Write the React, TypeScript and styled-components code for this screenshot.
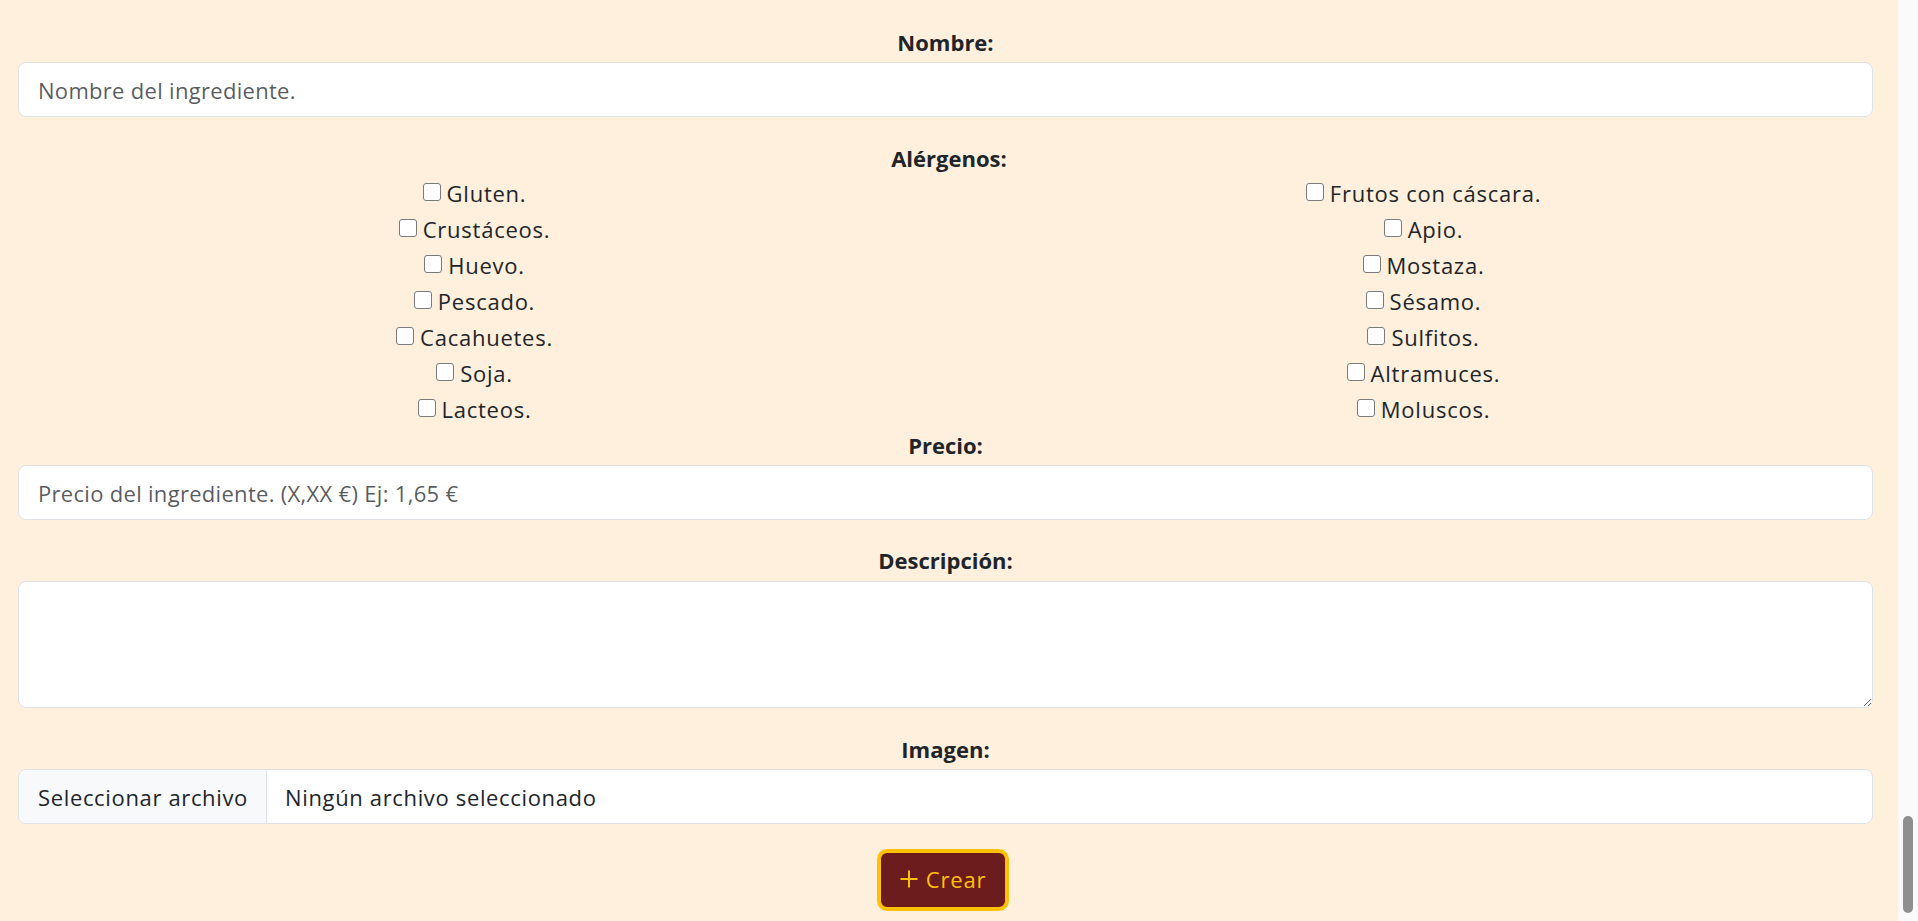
import React from "react";
import styled, { createGlobalStyle } from "styled-components";

const GlobalStyle = createGlobalStyle`
  html, body {
    margin: 0;
    padding: 0;
    height: 100%;
    overflow: hidden;
  }
  body {
    background: #fff0dd;
    font-family: "Open Sans", "Liberation Sans", sans-serif;
    color: #212529;
  }
  * { box-sizing: border-box; }
`;

const Screen = styled.div`
  display: flex;
  height: 100vh;
  overflow: hidden;
`;

const Main = styled.form`
  flex: 1;
  min-width: 0;
  display: flex;
  flex-direction: column;
  padding: 26px 25px 0 18px;
`;

const Field = styled.div<{ $gap?: number }>`
  display: flex;
  flex-direction: column;
  margin-bottom: ${(p) => (p.$gap ?? 25)}px;
`;

const Label = styled.label<{ $mb?: number }>`
  display: block;
  text-align: center;
  font-weight: 700;
  font-size: 22px;
  line-height: 33px;
  margin-bottom: ${(p) => (p.$mb ?? 3)}px;
  color: #212529;
`;

const TextInput = styled.input`
  height: 55px;
  width: 100%;
  border: 1px solid #dee2e6;
  border-radius: 8px;
  background: #fff;
  padding: 0 19px;
  font-family: inherit;
  font-size: 22px;
  letter-spacing: 0.3px;
  color: #212529;
  outline: none;
  &::placeholder {
    color: rgba(33, 37, 41, 0.75);
  }
`;

const TextArea = styled.textarea`
  height: 127px;
  width: 100%;
  border: 1px solid #dee2e6;
  border-radius: 8px;
  background: #fff;
  padding: 10px 19px;
  font-family: inherit;
  font-size: 22px;
  color: #212529;
  resize: vertical;
  outline: none;
  display: block;
`;

const AllergenBlock = styled.div`
  margin: 0 -25px 2px -18px;
  display: flex;
  flex-direction: column;
`;

const AllergenGrid = styled.div`
  display: grid;
  grid-template-columns: 1fr 1fr;
`;

const AllergenColumn = styled.div`
  display: flex;
  flex-direction: column;
  align-items: center;
`;

const CheckRow = styled.label`
  display: flex;
  align-items: center;
  gap: 6px;
  height: 36px;
  font-size: 22px;
  line-height: 36px;
  letter-spacing: 0.75px;
  color: #212529;
`;

const CheckBox = styled.input.attrs({ type: "checkbox" })`
  appearance: none;
  -webkit-appearance: none;
  margin: 0 0 3px 0;
  width: 18px;
  height: 18px;
  border: 1px solid #7a7a7a;
  border-radius: 3px;
  background: #fff;
  flex: none;
`;

const FileBox = styled.div`
  display: flex;
  height: 55px;
  border: 1px solid #dee2e6;
  border-radius: 8px;
  background: #fff;
  overflow: hidden;
  font-size: 22px;
  letter-spacing: 0.65px;
`;

const FileButton = styled.span`
  display: flex;
  align-items: center;
  padding: 0 18px 0 19px;
  background: #f8f9fa;
  border-right: 1px solid #dee2e6;
  color: #212529;
  white-space: nowrap;
`;

const FileName = styled.span`
  display: flex;
  align-items: center;
  padding-left: 18px;
  color: #212529;
`;

const SubmitRow = styled.div`
  display: flex;
  justify-content: center;
  padding-right: 5px;
`;

const CreateButton = styled.button`
  display: flex;
  align-items: center;
  justify-content: center;
  gap: 8px;
  width: 132px;
  height: 62px;
  border: 4px solid #ffc107;
  border-radius: 10px;
  background: #6d1c1d;
  color: #ffc107;
  font-family: inherit;
  font-size: 22px;
  letter-spacing: 0.8px;
  padding: 0 0 2px 0;
  cursor: pointer;
`;

const ScrollTrack = styled.div`
  width: 20px;
  flex: none;
  background: #fafafa;
  display: flex;
  flex-direction: column;
  justify-content: flex-end;
  align-items: center;
  padding-bottom: 8px;
`;

const ScrollThumb = styled.div`
  width: 10px;
  height: 97px;
  border-radius: 5px;
  background: #8f8f8f;
`;

const PlusIcon = () => (
  <svg width="18" height="18" viewBox="0 0 18 18" fill="none">
    <path d="M9 0.5v17M0.5 9h17" stroke="currentColor" strokeWidth="2" />
  </svg>
);

const left = ["Gluten.", "Crustáceos.", "Huevo.", "Pescado.", "Cacahuetes.", "Soja.", "Lacteos."];
const right = [
  "Frutos con cáscara.",
  "Apio.",
  "Mostaza.",
  "Sésamo.",
  "Sulfitos.",
  "Altramuces.",
  "Moluscos.",
];

export default function App() {
  return (
    <>
      <GlobalStyle />
      <Screen>
        <Main onSubmit={(e) => e.preventDefault()}>
          <Field>
            <Label htmlFor="nombre">Nombre:</Label>
            <TextInput id="nombre" placeholder="Nombre del ingrediente." />
          </Field>

          <AllergenBlock>
            <Label $mb={0}>Alérgenos:</Label>
            <AllergenGrid>
              <AllergenColumn>
                {left.map((a) => (
                  <CheckRow key={a}>
                    <CheckBox />
                    {a}
                  </CheckRow>
                ))}
              </AllergenColumn>
              <AllergenColumn>
                {right.map((a) => (
                  <CheckRow key={a}>
                    <CheckBox />
                    {a}
                  </CheckRow>
                ))}
              </AllergenColumn>
            </AllergenGrid>
          </AllergenBlock>

          <Field $gap={24}>
            <Label htmlFor="precio">Precio:</Label>
            <TextInput id="precio" placeholder="Precio del ingrediente. (X,XX €) Ej: 1,65 €" />
          </Field>

          <Field>
            <Label htmlFor="desc" $mb={4}>Descripción:</Label>
            <TextArea id="desc" />
          </Field>

          <Field>
            <Label>Imagen:</Label>
            <FileBox>
              <FileButton>Seleccionar archivo</FileButton>
              <FileName>Ningún archivo seleccionado</FileName>
            </FileBox>
          </Field>

          <SubmitRow>
            <CreateButton type="submit">
              <PlusIcon />
              Crear
            </CreateButton>
          </SubmitRow>
        </Main>
        <ScrollTrack>
          <ScrollThumb />
        </ScrollTrack>
      </Screen>
    </>
  );
}
